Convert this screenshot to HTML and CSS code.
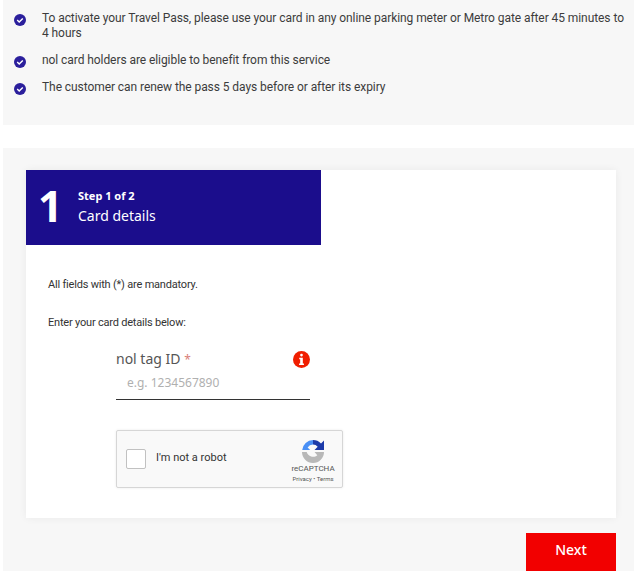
FILE: index.html
```html
<!DOCTYPE html>
<html lang="en">
<head>
  <meta charset="UTF-8">
  <meta name="viewport" content="width=device-width,initial-scale=1.0">
  <title>Travel Pass</title>
  <link rel="stylesheet" href="styles.css">
</head>
<body>
  <section class="notes">
    <ul class="note-list">
      <li>
        <svg class="tick" viewBox="0 0 12 12"><circle cx="6" cy="6" r="6" fill="#2b1f9c"/><path d="M3.2 6l2 2 3.6-3.6" fill="none" stroke="#fff" stroke-width="1.4"/></svg>
        <span>To activate your Travel Pass, please use your card in any online parking meter or Metro gate after 45 minutes to 4 hours</span>
      </li>
      <li>
        <svg class="tick" viewBox="0 0 12 12"><circle cx="6" cy="6" r="6" fill="#2b1f9c"/><path d="M3.2 6l2 2 3.6-3.6" fill="none" stroke="#fff" stroke-width="1.4"/></svg>
        <span>nol card holders are eligible to benefit from this service</span>
      </li>
      <li>
        <svg class="tick" viewBox="0 0 12 12"><circle cx="6" cy="6" r="6" fill="#2b1f9c"/><path d="M3.2 6l2 2 3.6-3.6" fill="none" stroke="#fff" stroke-width="1.4"/></svg>
        <span>The customer can renew the pass 5 days before or after its expiry</span>
      </li>
    </ul>
  </section>

  <section class="wizard">
    <div class="card">
      <div class="step-head">
        <div class="step-num">1</div>
        <div>
          <div class="step-count">Step 1 of 2</div>
          <div class="step-title">Card details</div>
        </div>
      </div>
      <div class="card-body">
        <p class="hint hint-first">All fields with (*) are mandatory.</p>
        <p class="hint">Enter your card details below:</p>
        <div class="field">
          <div class="field-top">
            <label for="tag">nol tag ID <span class="req">*</span></label>
            <svg class="info" viewBox="0 0 18 18"><circle cx="9" cy="9" r="9" fill="#f01e00"/><rect x="7.6" y="3" width="2.8" height="2.8" rx="1.2" fill="#fff"/><path d="M6.6 7.2h3.800v6h1.200v1.600H6.400v-1.600h1.200V8.800h-1z" fill="#fff"/></svg>
          </div>
          <input id="tag" class="field-input" type="text" placeholder="e.g. 1234567890">
        </div>
        <div class="captcha">
          <div class="captcha-box"></div>
          <div class="captcha-text">I'm not a robot</div>
          <div class="captcha-logo">
            <svg class="captcha-icon" viewBox="0 0 24 24">
              <path d="M12 1a11 11 0 0 1 8 3.400L23 1.500V11h-9.500l3.200-3.200A6.500 6.500 0 0 0 12 5.600z" fill="#1c3aa9"/>
              <path d="M12 1v4.600a6.500 6.500 0 0 0-5.400 3l2.600 2.400H1.200A11 11 0 0 1 12 1z" fill="#4a90f5"/>
              <path d="M1 13h4.700a6.500 6.500 0 0 0 10.600 3.200l-2.800-3.200H23A11 11 0 0 1 1 13z" fill="#b8b8b8"/>
            </svg>
            <div class="captcha-brand">reCAPTCHA</div>
            <div class="captcha-links">Privacy • Terms</div>
          </div>
        </div>
      </div>
    </div>
    <div class="actions">
      <button class="next-btn">Next</button>
    </div>
  </section>
</body>
</html>
```
FILE: styles.css
```css
html, body { margin:0; padding:0; height:571px; overflow:hidden; }
body { background:#fff; font-family:Roboto,"Noto Sans",sans-serif; color:#3c3c3c; font-size:12px; letter-spacing:-.07px; }
.notes { background:#f7f7f7; margin-left:3px; height:125px; box-sizing:border-box; padding-top:11px; }
.note-list { list-style:none; margin:0; padding:0 0 0 11px; }
.note-list li { display:flex; gap:16px; margin-bottom:12px; line-height:15px; }
.note-list span { flex:1; padding-right:8px; }
.tick { width:12px; height:12px; flex:none; margin-top:3px; }
.wizard { background:#f7f7f7; margin:23px 0 0 3px; height:423px; box-sizing:border-box; padding:22px 18px 0 23px; }
.card { background:#fff; height:348px; box-shadow:0 0 8px rgba(0,0,0,0.06); }
.step-head { width:295px; height:75px; background:#1b0d8c; color:#fff; display:flex; align-items:center; font-family:"Noto Sans",sans-serif; letter-spacing:0; }
.step-num { width:52px; padding:0 0 5px 12px; box-sizing:border-box; font-size:43px; font-weight:700; line-height:1; }
.step-count { font-size:11px; font-weight:700; line-height:16px; }
.step-title { font-size:14px; line-height:24px; }
.card-body { padding:0 22px; }
.hint { font-size:11px; letter-spacing:-.2px; margin:0 0 18px; line-height:16px; color:#333; }
.hint-first { padding-top:32px; margin-bottom:22px; }
.req { color:#d98078; font-size:12px; line-height:1; }
.field { margin:0 0 0 68px; width:194px; letter-spacing:0; }
.field-top { display:flex; justify-content:space-between; align-items:center; }
.field-top label { font:14px/20px "Noto Sans",sans-serif; color:#555; }
.info { width:17px; height:17px; }
.field-input { display:block; width:100%; box-sizing:border-box; height:31px; border:none; border-bottom:1px solid #333; background:none; padding:0 0 3px 11px; font:12px "Noto Sans",sans-serif; outline:none; }
.field-input::placeholder { color:#b0b0b0; }
.captcha { margin:30px 0 0 68px; width:227px; height:58px; box-sizing:border-box; background:#f9f9f9; border:1px solid #d6d6d6; border-radius:2px; box-shadow:0 0 3px rgba(0,0,0,0.08); display:flex; align-items:center; position:relative; letter-spacing:0; }
.captcha-box { width:20px; height:20px; box-sizing:border-box; margin-left:9px; background:#fff; border:1px solid #c1c1c1; border-radius:2px; }
.captcha-text { margin-left:10px; padding-bottom:3px; font-size:11px; color:#333; }
.captcha-logo { position:absolute; right:7px; top:0; width:44px; text-align:center; color:#555; }
.captcha-icon { display:block; width:24px; height:24px; margin:8px auto 0; }
.captcha-brand { font-size:8px; line-height:11px; white-space:nowrap; }
.captcha-links { font-size:6px; line-height:9px; white-space:nowrap; }
.actions { display:flex; justify-content:flex-end; padding-top:15px; }
.next-btn { width:90px; height:38px; padding:0 0 5px; background:#f20000; color:#fff; border:none; font:500 14px "Noto Sans",sans-serif; }
```
